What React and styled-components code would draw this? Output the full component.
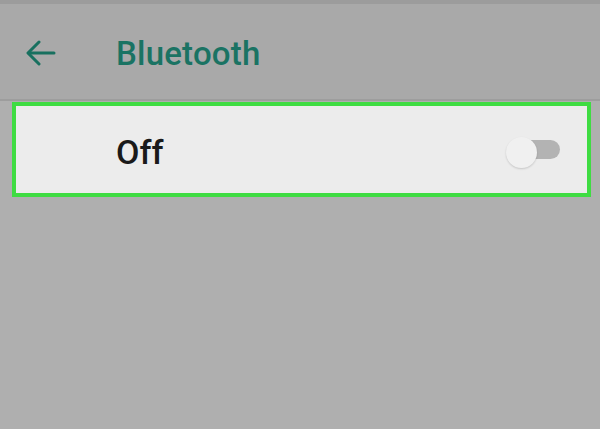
import React, { useState } from 'react'
import styled, { createGlobalStyle } from 'styled-components'

const GlobalStyle = createGlobalStyle`
  html, body {
    margin: 0;
    padding: 0;
    background: #afafaf;
    font-family: Roboto, "Noto Sans", Arial, sans-serif;
  }
`

const Screen = styled.div`
  width: 600px;
  height: 429px;
  background: #afafaf;
  overflow: hidden;
`

const StatusEdge = styled.div`
  height: 4px;
  background: #9c9c9c;
`

const Toolbar = styled.header`
  height: 95px;
  display: flex;
  align-items: center;
  background: #a9a9a9;
  border-bottom: 2px solid #9d9d9d;
`

const BackButton = styled.button`
  width: 116px;
  height: 100%;
  display: flex;
  align-items: center;
  padding: 2px 0 0 26px;
  border: 0;
  background: none;
  color: #18705f;
  cursor: pointer;
`

const Title = styled.h1`
  margin: 3px 0 0;
  font-size: 33px;
  font-weight: 500;
  color: #1a7363;
  letter-spacing: 0.2px;
`

const Content = styled.main`
  padding: 1px 9px 0 12px;
`

const SwitchRow = styled.div`
  height: 87px;
  display: flex;
  align-items: center;
  justify-content: space-between;
  padding: 0 27px 0 100px;
  background: #ececec;
  border: 4px solid #3fdc42;
`

const Label = styled.span`
  font-size: 34px;
  font-weight: 500;
  color: #1a1a1a;
  margin-top: 4px;
`

const Track = styled.button`
  position: relative;
  width: 44px;
  height: 19px;
  padding: 0;
  border: 0;
  border-radius: 10px;
  background: ${p => (p.on ? '#7fc6b8' : '#b3b3b3')};
  cursor: pointer;
`

const Thumb = styled.span`
  position: absolute;
  top: 50%;
  left: ${p => (p.on ? '22px' : '-10px')};
  width: 31px;
  height: 31px;
  margin-top: -13px;
  border-radius: 50%;
  background: ${p => (p.on ? '#1a7363' : '#f0f0f0')};
  box-shadow: 0 1px 2px rgba(0, 0, 0, 0.16);
`

const BackArrow = () => (
  <svg width="30" height="26" viewBox="0 0 30 26" fill="none" stroke="currentColor" strokeWidth="3" strokeLinecap="round" strokeLinejoin="round">
    <path d="M28 13H3" />
    <path d="M13 2L2 13l11 11" />
  </svg>
)

const App = () => {
  const [on, setOn] = useState(false)
  return (
    <Screen>
      <GlobalStyle />
      <StatusEdge />
      <Toolbar>
        <BackButton aria-label="Back">
          <BackArrow />
        </BackButton>
        <Title>Bluetooth</Title>
      </Toolbar>
      <Content>
        <SwitchRow>
          <Label>{on ? 'On' : 'Off'}</Label>
          <Track on={on} onClick={() => setOn(!on)} aria-label="Toggle Bluetooth">
            <Thumb on={on} />
          </Track>
        </SwitchRow>
      </Content>
    </Screen>
  )
}

export default App
